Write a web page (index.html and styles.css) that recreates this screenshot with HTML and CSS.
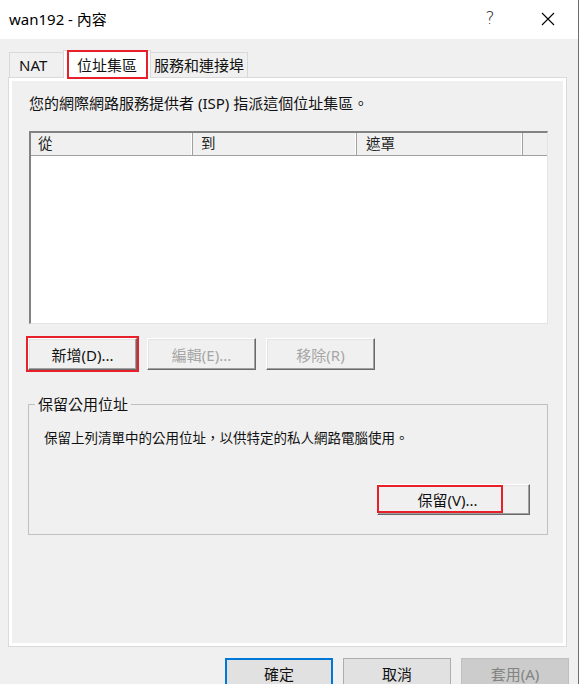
FILE: index.html
```html
<!DOCTYPE html>
<html lang="zh-Hant">
<head>
<meta charset="UTF-8" />
<meta name="viewport" content="width=device-width, initial-scale=1" />
<title>wan192 - 內容</title>
<link rel="stylesheet" href="styles.css">
</head>
<body>

<div class="window">
  <div class="titlebar">
    <span class="title">wan192 - 內容</span>
    <div class="caption">
      <span class="cap-btn help">?</span>
      <span class="cap-btn close">
        <svg width="14" height="14" viewBox="0 0 14 14"><path d="M1 1 L13 13 M13 1 L1 13" stroke="#000" stroke-width="1.1" fill="none"/></svg>
      </span>
    </div>
  </div>

  <div class="tabs">
    <span class="tab first">NAT</span>
    <span class="tab active">位址集區<span class="mark mark-tab"></span></span>
    <span class="tab">服務和連接埠</span>
  </div>

  <div class="panel">
    <p class="intro">您的網際網路服務提供者 (ISP) 指派這個位址集區。</p>

    <div class="list">
      <div class="list-head">
        <span class="col c1">從</span>
        <span class="col c2">到</span>
        <span class="col c3">遮罩</span>
        <span class="col c4"></span>
      </div>
    </div>

    <div class="btn-row">
      <button class="btn marked">新增(D)...</button>
      <button class="btn" disabled>編輯(E)...</button>
      <button class="btn" disabled>移除(R)</button>
    </div>

    <fieldset class="group">
      <legend>保留公用位址</legend>
      <p class="group-text">保留上列清單中的公用位址，以供特定的私人網路電腦使用。</p>
      <div class="group-foot">
        <button class="btn wide">保留(V)...<span class="mark mark-reserve"></span></button>
      </div>
    </fieldset>
  </div>

  <div class="dialog-btns">
    <button class="dbtn default">確定</button>
    <button class="dbtn">取消</button>
    <button class="dbtn" disabled>套用(A)</button>
  </div>
</div>

</body>
</html>
```

FILE: styles.css
```css
body { margin: 0; padding: 0; background: #f0f0f0; font-family: "Noto Sans", "Noto Sans CJK TC", sans-serif; font-size: 14px; color: #000; }
.window { width: 579px; height: 684px; box-sizing: border-box; border-right: 1px solid #6e6e6e; overflow: hidden; background: #f0f0f0; }

.titlebar { height: 39px; background: #fff; display: flex; align-items: center; justify-content: space-between; padding-left: 9px; }
.title { font-size: 15px; line-height: 20px; margin-top: -2px; }
.caption { display: flex; height: 39px; }
.cap-btn { width: 46px; display: flex; align-items: center; justify-content: center; }
.help { font-size: 17px; font-family: "DejaVu Sans", sans-serif; font-weight: 300; color: #222; margin-top: -3px; margin-right: 12px; }
.close { margin-right: 7px; margin-top: -1px; }

.tabs { display: flex; align-items: flex-end; height: 38px; padding-left: 9px; position: relative; z-index: 1; }
.tab {
  height: 24px; line-height: 24px; padding: 0 9px; font-size: 15px;
  border: 1px solid #d9d9d9; border-bottom: none; background: #f0f0f0;
  position: relative; color: #111;
}
.tab.first { width: 36px; }
.tab + .tab { border-left: none; }
.tab.active {
  height: 27px; line-height: 28px; background: #fff; margin: 0 -2px -1px -2px;
  padding: 0 13px; border-left: 1px solid #d9d9d9; z-index: 2;
}
.tab.active + .tab { border-left: none; padding: 0 3px 0 5px; }

.mark { position: absolute; border: 2px solid #e8202a; pointer-events: none; }
.mark-tab { left: 3px; top: -1px; width: 77px; height: 25px; }
.mark-reserve { left: -1px; top: 0px; width: 122px; height: 24px; }

.panel {
  margin-left: 8px; width: 559px; height: 570px; box-sizing: border-box;
  border: 1px solid #dadada; padding: 3px;
  display: flex; flex-direction: column;
  background: #f0f0f0; box-shadow: inset 0 0 0 3px #fff;
}
.intro { margin: 12px 0 0 17px; line-height: 20px; font-size: 15px; color: #111; }

.list {
  margin: 18px 0 0 17px; width: 519px; height: 193px; box-sizing: border-box; background: #fff;
  border-top: 2px solid #828282; border-left: 2px solid #828282;
  border-right: 1px solid #e3e3e3; border-bottom: 1px solid #e3e3e3;
}
.list-head { display: flex; height: 22px; background: #f0f0f0; border-bottom: 1px solid #a0a0a0; }
.col { box-sizing: border-box; height: 22px; line-height: 21px; padding-left: 7px; font-size: 14.5px; color: #222;
  border-right: 1px solid #a0a0a0; box-shadow: inset -1px 0 0 #fff; }
.c1 { width: 162px; }
.c2 { width: 164px; padding-left: 8px; }
.c3 { width: 166px; padding-left: 9px; }
.c4 { flex: 1; border-right: none; box-shadow: none; }

.btn-row { display: flex; gap: 10px; margin: 14px 0 0 16px; }
.btn {
  width: 109px; height: 32px; box-sizing: border-box; background: #f0f0f0; color: #111;
  font-family: inherit; font-size: 15px; padding: 0; position: relative;
  border: 1px solid; border-color: #fff #696969 #696969 #fff;
  box-shadow: inset -1px -1px 0 #a0a0a0, inset 1px 1px 0 #e3e3e3;
}
.btn:disabled { color: #a6a6a6; }
.btn.marked { outline: 2px solid #e8202a; outline-offset: 0; }

.group {
  margin: 24px 0 0 16px; width: 520px; height: 141px; box-sizing: border-box;
  border: 1px solid #c0c0c0; padding: 0 17px 0 15px;
}
.group legend { padding: 0 3px; margin-left: -9px; font-size: 15px; line-height: 20px; color: #111; }
.group-text { margin: 14px 0 0 0; line-height: 20px; font-size: 13.5px; color: #111; }
.group-foot { display: flex; justify-content: flex-end; margin-top: 36px; }
.btn.wide { width: 153px; height: 31px; text-align: center; padding-right: 12px; }

.dialog-btns { display: flex; justify-content: flex-end; gap: 10px; padding-right: 9px; margin-top: 11px; }
.dbtn {
  width: 108px; height: 30px; box-sizing: border-box; font-family: inherit; font-size: 15px;
  background: #e1e1e1; border: 1px solid #adadad; color: #111; padding: 0;
}
.dbtn.default { border: 2px solid #0078d7; }
.dbtn:disabled { background: #cccccc; border-color: #bfbfbf; color: #838383; }
```
